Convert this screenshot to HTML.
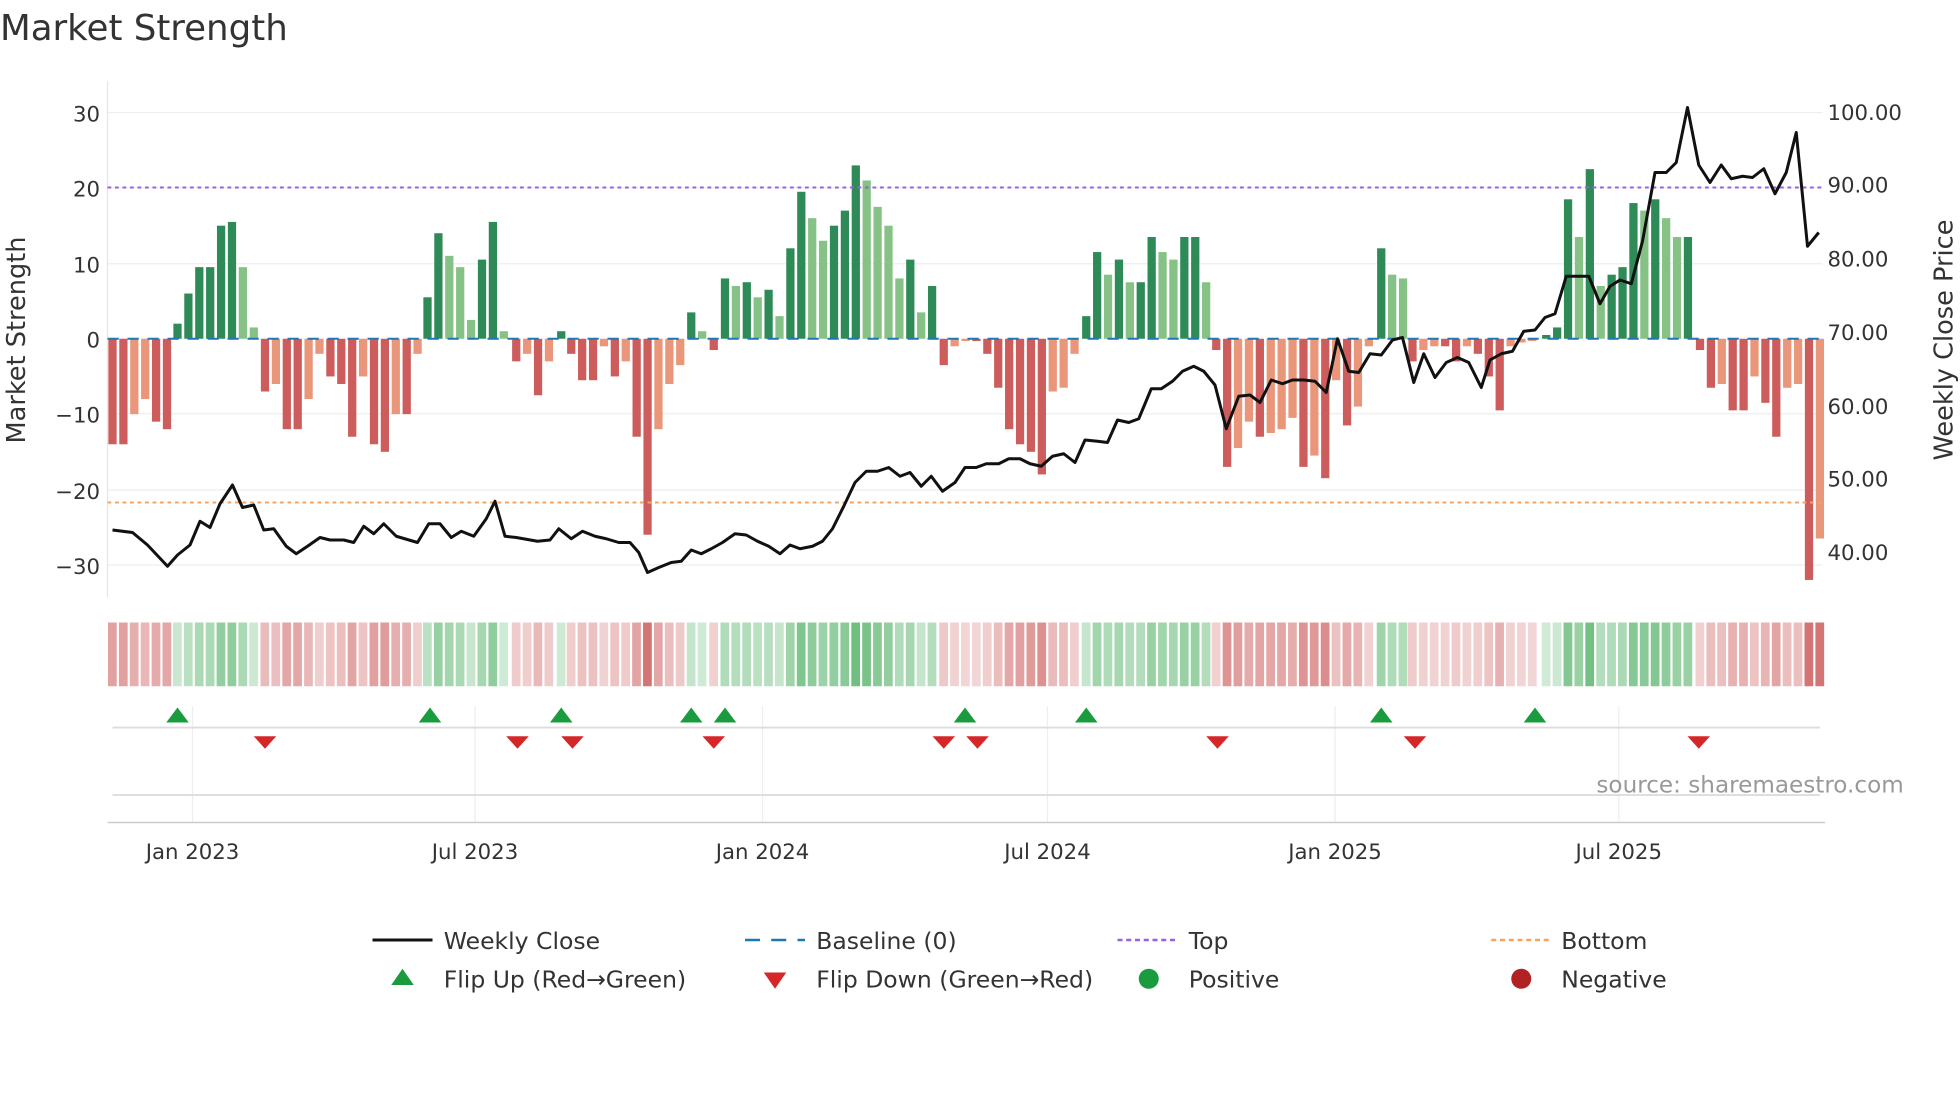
<!DOCTYPE html>
<html><head><meta charset="utf-8">
<style>
html,body{margin:0;padding:0;background:#fff;width:1960px;height:1102px;overflow:hidden}
svg{display:block}
text{font-family:"DejaVu Sans","Liberation Sans",sans-serif;fill:#333}
</style></head>
<body>
<svg id="s" width="1960" height="1102" viewBox="0 0 1568 881.6" xmlns="http://www.w3.org/2000/svg">
<text x="0" y="32" font-size="28.5" fill="#333">Market Strength</text>
<g stroke="#eee" stroke-width="1">
<line x1="86" x2="1458" y1="90" y2="90"/><line x1="86" x2="1458" y1="150" y2="150"/><line x1="86" x2="1458" y1="211" y2="211"/><line x1="86" x2="1458" y1="331" y2="331"/><line x1="86" x2="1458" y1="392" y2="392"/><line x1="86" x2="1458" y1="452" y2="452"/>
</g>
<line x1="86" x2="86" y1="65" y2="478" stroke="#e5e5e5"/>
<g font-size="17" text-anchor="end">
<text x="80" y="97">30</text><text x="80" y="157">20</text><text x="80" y="218">10</text><text x="80" y="278">0</text><text x="80" y="338">−10</text><text x="80" y="399">−20</text><text x="80" y="459">−30</text>
</g>
<g font-size="17">
<text x="1462" y="96">100.00</text><text x="1462" y="154">90.00</text><text x="1462" y="213">80.00</text><text x="1462" y="272">70.00</text><text x="1462" y="331">60.00</text><text x="1462" y="389">50.00</text><text x="1462" y="448">40.00</text>
</g>
<text transform="translate(20,272) rotate(-90)" font-size="20.5" text-anchor="middle">Market Strength</text>
<text transform="translate(1562,272) rotate(-90)" font-size="20.5" text-anchor="middle">Weekly Close Price</text>
<g id="bars"></g>
<line x1="86" x2="1458" y1="150" y2="150" stroke="#9b5fe0" stroke-width="1.6" stroke-dasharray="3,3"/>
<line x1="86" x2="1458" y1="402" y2="402" stroke="#f4a460" stroke-width="1.6" stroke-dasharray="3,3"/>
<line x1="86" x2="1458" y1="271" y2="271" stroke="#1f77b4" stroke-width="1.6" stroke-dasharray="9,7"/>
<polyline fill="none" stroke="#111" stroke-width="2.4" stroke-linejoin="round" points="90,424 106,426 118,436 134,453 142,444 152,436 160,417 168,422 176,403 186,388 194,406 203,404 211,424 219,423 229,437 237,443 246,437 256,430 264,432 275,432 283,434 291,421 299,427 307,419 317,429 334,434 343,419 352,419 361,430 369,425 379,429 389,415 396,401 404,429 413,430 430,433 440,432 447,423 457,431 466,425 476,429 485,431 495,434 504,434 511,442 518,458 527,454 537,450 545,449 553,440 561,443 569,439 578,434 588,427 597,428 606,433 615,437 624,443 632,436 640,439 650,437 658,433 666,423 675,405 684,386 693,377 702,377 711,374 720,381 728,378 737,389 745,381 754,393 764,386 772,374 781,374 789,371 799,371 807,367 816,367 824,371 833,373 842,365 851,363 860,370 868,352 878,353 886,354 894,336 903,338 911,335 921,311 929,311 938,305 946,297 955,293 963,297 972,308 981,343 991,317 1000,316 1008,322 1017,304 1026,307 1034,304 1043,304 1052,305 1061,314 1070,271 1079,297 1087,298 1096,283 1105,284 1114,272 1122,270 1131,306 1139,283 1148,302 1157,290 1166,286 1175,290 1185,310 1192,288 1201,283 1210,281 1219,265 1228,264 1236,254 1244,251 1253,221 1262,221 1271,221 1280,243 1288,229 1296,224 1305,227 1314,193 1324,138 1333,138 1341,130 1350,86 1359,132 1368,146 1377,132 1385,143 1394,141 1402,142 1411,135 1420,155 1429,138 1437,106 1446,197 1455,186"/>
<g id="heat"></g>
<g stroke="#eee" stroke-width="1">
<line x1="154" x2="154" y1="565" y2="658"/><line x1="380" x2="380" y1="565" y2="658"/><line x1="610" x2="610" y1="565" y2="658"/><line x1="838" x2="838" y1="565" y2="658"/><line x1="1068" x2="1068" y1="565" y2="658"/><line x1="1295" x2="1295" y1="565" y2="658"/>
</g>
<line x1="90" x2="1456" y1="582" y2="582" stroke="#ddd" stroke-width="1.5"/>
<line x1="90" x2="1456" y1="636" y2="636" stroke="#ddd" stroke-width="1.5"/>
<line x1="86" x2="1460" y1="658" y2="658" stroke="#ccc" stroke-width="1.2"/>
<g id="marks"></g>
<text x="1523" y="634" font-size="18.5" text-anchor="end" style="fill:#999">source: sharemaestro.com</text>
<g font-size="17" text-anchor="middle">
<text x="154" y="687">Jan 2023</text><text x="380" y="687">Jul 2023</text><text x="610" y="687">Jan 2024</text><text x="838" y="687">Jul 2024</text><text x="1068" y="687">Jan 2025</text><text x="1295" y="687">Jul 2025</text>
</g>
<g font-size="18.8">
<line x1="298" x2="346" y1="752" y2="752" stroke="#111" stroke-width="2.4"/><text x="355" y="759">Weekly Close</text>
<line x1="596" x2="644" y1="752" y2="752" stroke="#1f77b4" stroke-width="2" stroke-dasharray="12,9"/><text x="653" y="759">Baseline (0)</text>
<line x1="894" x2="940" y1="752" y2="752" stroke="#9b5fe0" stroke-width="2" stroke-dasharray="4,3"/><text x="951" y="759">Top</text>
<line x1="1193" x2="1239" y1="752" y2="752" stroke="#f4a460" stroke-width="2" stroke-dasharray="4,3"/><text x="1249" y="759">Bottom</text>
<path d="M313,788 L331,788 L322,775 Z" fill="#1a9c3e"/><text x="355" y="790">Flip Up (Red→Green)</text>
<path d="M611,778 L629,778 L620,791 Z" fill="#d62728"/><text x="653" y="790">Flip Down (Green→Red)</text>
<circle cx="919" cy="783" r="8" fill="#1a9c3e"/><text x="951" y="790">Positive</text>
<circle cx="1217" cy="783" r="8" fill="#b22222"/><text x="1249" y="790">Negative</text>
</g>
</svg>
<script>
var seg=[[90,[-14,-14,-10,-8,-11,-12]],[142,[2,6,9.5,9.5,15,15.5,9.5,1.5]],[212,[-7,-6,-12,-12,-8,-2,-5,-6,-13,-5,-14,-15,-10,-10,-2]],[342,[5.5,14,11,9.5,2.5,10.5,15.5,1]],[413,[-3,-2,-7.5,-3]],[449,[1]],[457,[-2,-5.5,-5.5,-1,-5,-3,-13,-26,-12,-6,-3.5]],[553,[3.5,1]],[571,[-1.5]],[580,[8,7,7.5,5.5,6.5,3,12,19.5,16,13,15,17,23,21,17.5,15,8,10.5,3.5,7]],[755,[-3.5,-1,-0.3,-0.3,-2,-6.5,-12,-14,-15,-18,-7,-6.5,-2]],[869,[3,11.5,8.5,10.5,7.5,7.5,13.5,11.5,10.5,13.5,13.5,7.5]],[973,[-1.5,-17,-14.5,-11,-13,-12.5,-12,-10.5,-17,-15.5,-18.5,-5.5,-11.5,-9,-1]],[1105,[12,8.5,8]],[1130,[-3,-1.5,-1,-1,-3,-1,-2,-5,-9.5,-1,-0.5,-0.3]],[1237,[0.5,1.5,18.5,13.5,22.5,7,8.5,9.5,18,17,18.5,16,13.5,13.5]],[1360,[-1.5,-6.5,-6,-9.5,-9.5,-5,-8.5,-13,-6.5,-6,-32,-26.5]]];
var ns="http://www.w3.org/2000/svg",dx=8.72;
var B=document.getElementById("bars"),H=document.getElementById("heat"),M=document.getElementById("marks");
function el(p,t,a){var e=document.createElementNS(ns,t);for(var k in a)e.setAttribute(k,a[k]);p.appendChild(e);return e;}
var prev=0;
seg.forEach(function(s){for(var j=0;j<s[1].length;j++){var x=s[0]+j*dx,val=s[1][j],h=Math.abs(val)*6.03;
var strong=Math.abs(val)>=Math.abs(prev)||(val*prev<=0);var c;
if(val>=0)c=strong?"#2e8b57":"#86c286";else c=strong?"#cd5c5c":"#e9967a";
el(B,"rect",{x:x-3.3,y:val>=0?271-h:271,width:6.6,height:Math.max(h,0.5),fill:c});
var op=0.25+Math.min(Math.abs(val)/25,1)*0.6;
el(H,"rect",{x:x-3.6,y:498,width:7,height:51,fill:val>=0?"#4daf62":"#cd5c5c","fill-opacity":op});prev=val;}});
[142,344,449,553,580,772,869,1105,1228].forEach(function(x){el(M,"path",{d:"M"+(x-9)+",578 L"+(x+9)+",578 L"+x+",566 Z",fill:"#1a9c3e"});});
[212,414,458,571,755,782,974,1132,1359].forEach(function(x){el(M,"path",{d:"M"+(x-9)+",589 L"+(x+9)+",589 L"+x+",599 Z",fill:"#d62728"});});
</script>
</body></html>
